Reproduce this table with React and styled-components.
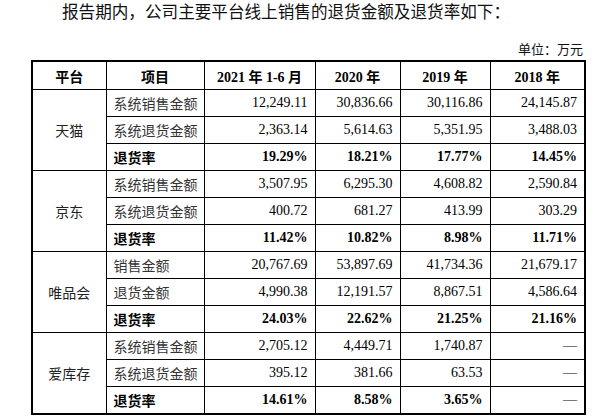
import React from 'react'
import styled, { createGlobalStyle } from 'styled-components'

const GlobalStyle = createGlobalStyle`
  html, body {
    margin: 0;
    padding: 0;
    background: #fff;
  }
  body {
    font-family: "Liberation Serif", "Noto Sans CJK SC", serif;
    color: #000;
  }
`

const Page = styled.div`
  width: 607px;
  height: 420px;
  overflow: hidden;
`

const Intro = styled.p`
  margin: 0;
  padding-left: 62px;
  height: 26px;
  line-height: 26px;
  font-size: 16.6px;
  color: #111;
`

const Unit = styled.div`
  margin-top: 14px;
  height: 20px;
  line-height: 20px;
  padding-right: 24px;
  text-align: right;
  font-size: 13px;
  color: #111;
`

const Table = styled.table`
  margin-left: 31px;
  width: 553px;
  table-layout: fixed;
  border-collapse: collapse;
  border: 2px solid #000;
  font-size: 14px;
`

const HeadCell = styled.th`
  height: 27px;
  padding: 0;
  border: 1px solid #000;
  font-weight: bold;
  text-align: center;
  font-size: 14px;
`

const PlatformCell = styled.td`
  border: 1px solid #000;
  text-align: center;
  padding: 0;
  color: #222;
`

const ItemCell = styled.td`
  height: 26px;
  padding: 0 0 0 7px;
  border: 1px solid #000;
  text-align: left;
  color: ${p => (p.$bold ? '#000' : '#333')};
  font-weight: ${p => (p.$bold ? 'bold' : 'normal')};
`

const NumCell = styled.td`
  padding: 0 7px 0 0;
  border: 1px solid #000;
  text-align: right;
  font-weight: ${p => (p.$bold ? 'bold' : 'normal')};
`

const Note = styled.p`
  margin: 4px 0 0;
  padding-left: 60px;
  font-size: 14px;
  line-height: 20px;
  color: #222;
  white-space: nowrap;
`

const groups = [
  {
    name: '天猫',
    rows: [
      ['系统销售金额', '12,249.11', '30,836.66', '30,116.86', '24,145.87'],
      ['系统退货金额', '2,363.14', '5,614.63', '5,351.95', '3,488.03'],
      ['退货率', '19.29%', '18.21%', '17.77%', '14.45%'],
    ],
  },
  {
    name: '京东',
    rows: [
      ['系统销售金额', '3,507.95', '6,295.30', '4,608.82', '2,590.84'],
      ['系统退货金额', '400.72', '681.27', '413.99', '303.29'],
      ['退货率', '11.42%', '10.82%', '8.98%', '11.71%'],
    ],
  },
  {
    name: '唯品会',
    rows: [
      ['销售金额', '20,767.69', '53,897.69', '41,734.36', '21,679.17'],
      ['退货金额', '4,990.38', '12,191.57', '8,867.51', '4,586.64'],
      ['退货率', '24.03%', '22.62%', '21.25%', '21.16%'],
    ],
  },
  {
    name: '爱库存',
    rows: [
      ['系统销售金额', '2,705.12', '4,449.71', '1,740.87', '—'],
      ['系统退货金额', '395.12', '381.66', '63.53', '—'],
      ['退货率', '14.61%', '8.58%', '3.65%', '—'],
    ],
  },
]

const widths = [74, 98, 111, 85, 90, 95]
const heads = ['平台', '项目', '2021 年 1-6 月', '2020 年', '2019 年', '2018 年']

export default function App() {
  return (
    <Page>
      <GlobalStyle />
      <Intro>报告期内，公司主要平台线上销售的退货金额及退货率如下：</Intro>
      <Unit>单位：万元</Unit>
      <Table>
        <colgroup>
          {widths.map((w, i) => (
            <col key={i} style={{ width: w }} />
          ))}
        </colgroup>
        <thead>
          <tr>
            {heads.map(h => (
              <HeadCell key={h}>{h}</HeadCell>
            ))}
          </tr>
        </thead>
        <tbody>
          {groups.map(g =>
            g.rows.map((r, i) => {
              const bold = i === 2
              return (
                <tr key={g.name + i}>
                  {i === 0 && <PlatformCell rowSpan={3}>{g.name}</PlatformCell>}
                  <ItemCell $bold={bold}>{r[0]}</ItemCell>
                  {r.slice(1).map((v, j) => (
                    <NumCell key={j} $bold={bold && v !== '—'}>
                      {v}
                    </NumCell>
                  ))}
                </tr>
              )
            })
          )}
        </tbody>
      </Table>
      <Note>注：　　上述系统销售金额、系统退货金额为各平台后台系统统计数据，退货率为系统退货金额占系统销售金额的比例。</Note>
    </Page>
  )
}
